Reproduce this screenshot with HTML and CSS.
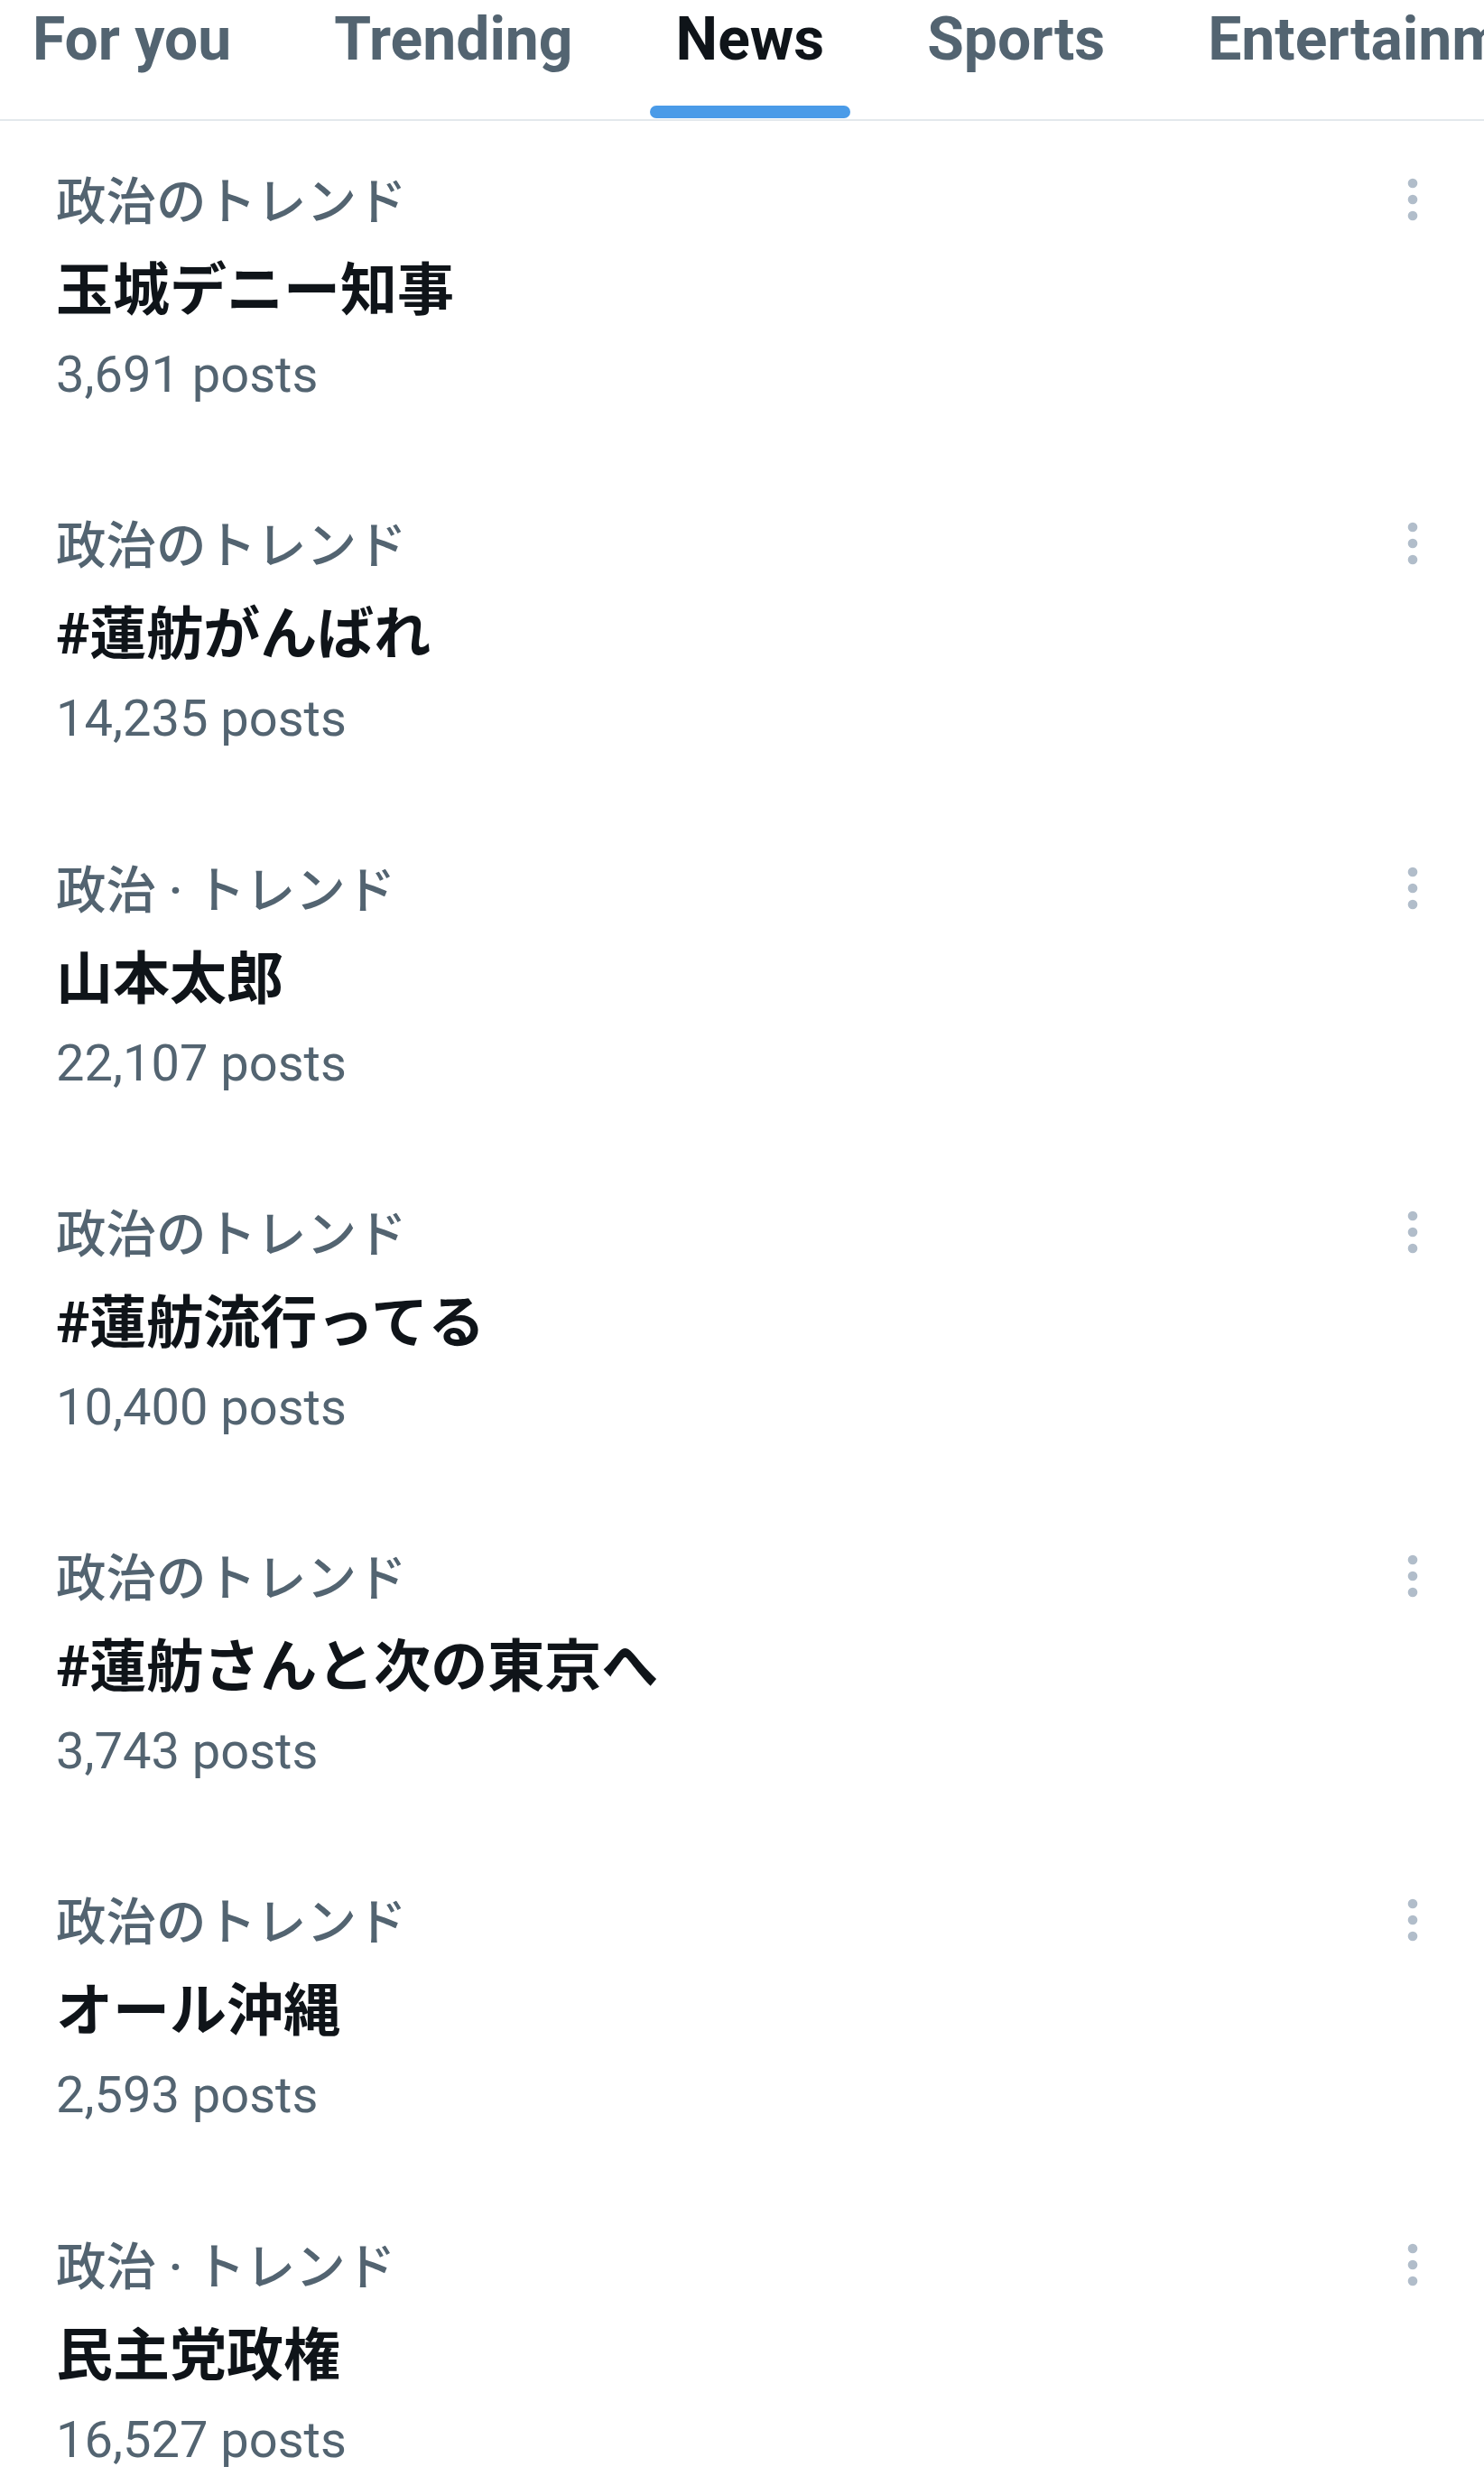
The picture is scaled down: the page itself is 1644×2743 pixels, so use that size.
FILE: index.html
```html
<!DOCTYPE html>
<html lang="ja">
<head>
<meta charset="utf-8">
<title>News</title>
<link rel="stylesheet" href="styles.css">
</head>
<body>
<nav class="tabs">
  <div class="tab"><span class="tab-label">For you</span><span class="tab-bar"></span></div>
  <div class="tab"><span class="tab-label">Trending</span><span class="tab-bar"></span></div>
  <div class="tab tab-active"><span class="tab-label">News</span><span class="tab-bar"></span></div>
  <div class="tab"><span class="tab-label">Sports</span><span class="tab-bar"></span></div>
  <div class="tab"><span class="tab-label">Entertainment</span><span class="tab-bar"></span></div>
</nav>
<main class="list">
  <div class="trend">
    <div class="trend-body">
      <div class="trend-cat">政治のトレンド</div>
      <div class="trend-title">玉城デニー知事</div>
      <div class="trend-count">3,691 posts</div>
    </div>
    <svg class="more" viewBox="0 0 12 48" width="12" height="48"><circle cx="6" cy="6" r="5.3"/><circle cx="6" cy="24" r="5.3"/><circle cx="6" cy="42" r="5.3"/></svg>
  </div>
  <div class="trend">
    <div class="trend-body">
      <div class="trend-cat">政治のトレンド</div>
      <div class="trend-title">#蓮舫がんばれ</div>
      <div class="trend-count">14,235 posts</div>
    </div>
    <svg class="more" viewBox="0 0 12 48" width="12" height="48"><circle cx="6" cy="6" r="5.3"/><circle cx="6" cy="24" r="5.3"/><circle cx="6" cy="42" r="5.3"/></svg>
  </div>
  <div class="trend">
    <div class="trend-body">
      <div class="trend-cat">政治 · トレンド</div>
      <div class="trend-title">山本太郎</div>
      <div class="trend-count">22,107 posts</div>
    </div>
    <svg class="more" viewBox="0 0 12 48" width="12" height="48"><circle cx="6" cy="6" r="5.3"/><circle cx="6" cy="24" r="5.3"/><circle cx="6" cy="42" r="5.3"/></svg>
  </div>
  <div class="trend">
    <div class="trend-body">
      <div class="trend-cat">政治のトレンド</div>
      <div class="trend-title">#蓮舫流行ってる</div>
      <div class="trend-count">10,400 posts</div>
    </div>
    <svg class="more" viewBox="0 0 12 48" width="12" height="48"><circle cx="6" cy="6" r="5.3"/><circle cx="6" cy="24" r="5.3"/><circle cx="6" cy="42" r="5.3"/></svg>
  </div>
  <div class="trend">
    <div class="trend-body">
      <div class="trend-cat">政治のトレンド</div>
      <div class="trend-title">#蓮舫さんと次の東京へ</div>
      <div class="trend-count">3,743 posts</div>
    </div>
    <svg class="more" viewBox="0 0 12 48" width="12" height="48"><circle cx="6" cy="6" r="5.3"/><circle cx="6" cy="24" r="5.3"/><circle cx="6" cy="42" r="5.3"/></svg>
  </div>
  <div class="trend">
    <div class="trend-body">
      <div class="trend-cat">政治のトレンド</div>
      <div class="trend-title">オール沖縄</div>
      <div class="trend-count">2,593 posts</div>
    </div>
    <svg class="more" viewBox="0 0 12 48" width="12" height="48"><circle cx="6" cy="6" r="5.3"/><circle cx="6" cy="24" r="5.3"/><circle cx="6" cy="42" r="5.3"/></svg>
  </div>
  <div class="trend">
    <div class="trend-body">
      <div class="trend-cat">政治 · トレンド</div>
      <div class="trend-title">民主党政権</div>
      <div class="trend-count">16,527 posts</div>
    </div>
    <svg class="more" viewBox="0 0 12 48" width="12" height="48"><circle cx="6" cy="6" r="5.3"/><circle cx="6" cy="24" r="5.3"/><circle cx="6" cy="42" r="5.3"/></svg>
  </div>
</main>
</body>
</html>
```
FILE: styles.css
```css
* { box-sizing: border-box; }

html, body {
  margin: 0;
  padding: 0;
  background: #ffffff;
}

body {
  font-family: "Roboto", "Noto Sans CJK JP", sans-serif;
  color: #0f1419;
  overflow-x: hidden;
}

.tabs {
  display: flex;
  gap: 56px;
  height: 134px;
  padding: 0 0 0 7px;
  border-bottom: 2px solid #e3e8ec;
  overflow: hidden;
  white-space: nowrap;
}

.tab {
  display: flex;
  flex-direction: column;
  justify-content: space-between;
  flex: none;
  padding: 0 29px;
  height: 132px;
}

.tab-label {
  display: block;
  padding-top: 11px;
  font-size: 66px;
  line-height: 66px;
  font-weight: 700;
  color: #536471;
}

.tab-bar {
  display: block;
  height: 14px;
  margin: 0 -29px 1px;
  border-radius: 7px;
  background: transparent;
}

.tab-active .tab-label { color: #0f1419; }
.tab-active .tab-bar { background: #4a9be8; }

.list {
  display: flex;
  flex-direction: column;
}

.trend {
  display: flex;
  align-items: flex-start;
  justify-content: space-between;
  height: 381.3px;
  padding: 43px 73px 0 62px;
}

.trend-body {
  display: flex;
  flex-direction: column;
}

.trend-cat {
  font-size: 55.5px;
  line-height: 96px;
  font-weight: 500;
  color: #536471;
  white-space: nowrap;
}

.trend-title {
  font-size: 63px;
  line-height: 98px;
  font-weight: 700;
  color: #0f1419;
  white-space: nowrap;
}

.trend-count {
  font-size: 56px;
  line-height: 88px;
  color: #536471;
  white-space: nowrap;
}

.more {
  display: block;
  flex: none;
  margin-top: 20px;
  fill: #b1bdca;
}
```
